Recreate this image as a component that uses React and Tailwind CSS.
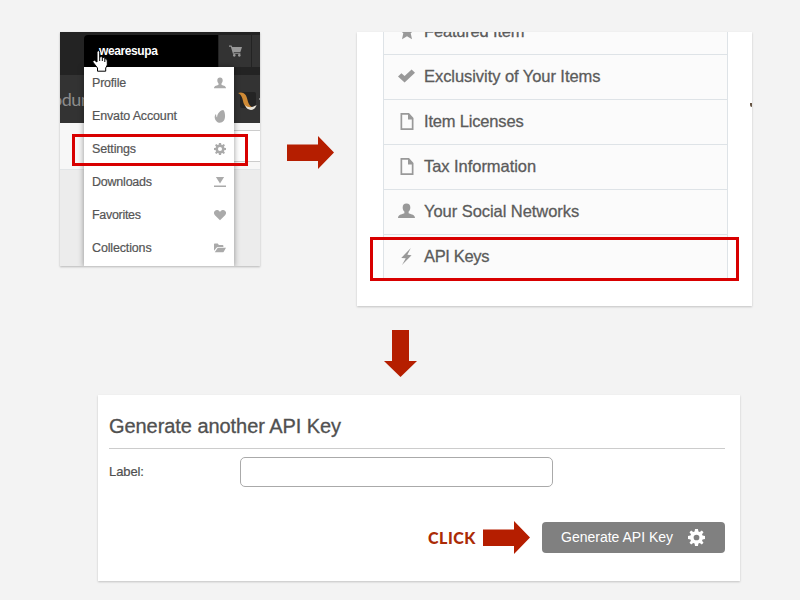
import React from 'react';

const GLYPHS = {
  user: 'M8 0.5C5.6 0.5 4.4 2 4.4 4.4C4.4 6.4 5.2 7.8 6 8.6V10.2C5 11.2 0 11 0 15H16C16 11 11 11.2 10 10.2V8.6C10.8 7.8 11.6 6.4 11.6 4.4C11.6 2 10.4 0.5 8 0.5Z',
  leaf: 'M12.6 0.2C14.6 1 16 9.8 13 13.3C10.6 16.3 5.8 16.5 3.3 13.8C0.4 11.3 0.4 7.5 1.9 5.4C2.4 4.9 2.9 5.3 2.9 6C2.8 7.5 3.2 8.6 4.1 9.3C4.1 3.8 9.8 -0.4 12.6 0.2Z',
  gear: 'M6.6 0H9.4L9.8 2.3L11.1 2.8L13 1.4L14.6 3L13.2 4.9L13.7 6.2L16 6.6V9.4L13.7 9.8L13.2 11.1L14.6 13L13 14.6L11.1 13.2L9.8 13.7L9.4 16H6.6L6.2 13.7L4.9 13.2L3 14.6L1.4 13L2.8 11.1L2.3 9.8L0 9.4V6.6L2.3 6.2L2.8 4.9L1.4 3L3 1.4L4.9 2.8L6.2 2.3ZM8 5.3A2.7 2.7 0 1 0 8 10.7A2.7 2.7 0 1 0 8 5.3Z',
  download: 'M2.5 1.2H13.5L8 10ZM0 12.6H16V14.8H0Z',
  heart: 'M8 15L1.2 8.2C-2 4.5 1.5 0.6 4.6 1.3C6.2 1.6 7.3 2.6 8 3.9C8.7 2.6 9.8 1.6 11.4 1.3C14.5 0.6 18 4.5 14.8 8.2Z',
  folder: 'M0 11.5V3Q0 2 1 2H5L6.5 4H11.5Q12.5 4 12.5 5V6.5H5.3Q4.2 6.5 3.6 7.4ZM1 13.8L4.6 8.2Q5 7.6 5.8 7.6H16L13 13Q12.5 13.8 11.5 13.8Z',
  star: 'M8 0L10.3 5.4L16 5.9L11.7 9.7L13 15.4L8 12.4L3 15.4L4.3 9.7L0 5.9L5.7 5.4Z',
  check: 'M0 8.4L3.2 5.2L6.2 8.1L12.8 1.6L16 4.8L6.2 14.4Z',
  file: 'M1.5 0H10L14.5 4.6V16H1.5ZM3.2 1.7V14.3H12.8V6H9V1.7Z',
  bolt: 'M12.6 0L2.4 9.3L7.2 9.6L3.2 16L13.4 6.8L8.9 6.4Z',
  cart: 'M0 0.5H3L4 2.5H16L14 9.2H5.7L6 10.4H14V11.8H4.8L2.3 2.2H0ZM4.8 13.8A1.7 1.7 0 1 0 8.2 13.8A1.7 1.7 0 1 0 4.8 13.8ZM11 13.8A1.7 1.7 0 1 0 14.4 13.8A1.7 1.7 0 1 0 11 13.8Z',
};

function Icon({ name, className }) {
  return (
    <svg viewBox="0 0 16 16" preserveAspectRatio="none" fill="currentColor" fillRule="evenodd" className={className}>
      <path d={GLYPHS[name]} />
    </svg>
  );
}

function Arrow({ className }) {
  return (
    <svg viewBox="0 0 47 33" fill="#b51e00" className={className}>
      <path d="M0 8.5H31V0L47 16.5L31 33V25H0Z" />
    </svg>
  );
}

const MENU = [
  ['Profile', 'user', 'w-3 h-3', 'tracking-[-0.2px]'],
  ['Envato Account', 'leaf', 'w-3 h-[13px]', 'tracking-[-0.15px]'],
  ['Settings', 'gear', 'w-3 h-3', 'tracking-[-0.15px]'],
  ['Downloads', 'download', 'w-3 h-3', 'tracking-[-0.22px]'],
  ['Favorites', 'heart', 'w-3 h-3', 'tracking-[-0.3px]'],
  ['Collections', 'folder', 'w-3 h-3', 'tracking-[-0.15px]'],
];

const ROWS = [
  ['Featured Item', 'star', 'w-4 h-[17px] mt-px', 'tracking-[-0.18px]'],
  ['Exclusivity of Your Items', 'check', 'w-[17px] h-4', 'tracking-[-0.06px]'],
  ['Item Licenses', 'file', 'w-4 h-[17px] mt-px', 'tracking-[-0.18px]'],
  ['Tax Information', 'file', 'w-4 h-[17px] mt-px', 'tracking-[-0.05px]'],
  ['Your Social Networks', 'user', 'w-[17px] h-4', 'tracking-[-0.05px]'],
  ['API Keys', 'bolt', 'w-[15px] h-[17px] mt-px', 'tracking-[-0.35px]'],
];

function AccountMenu() {
  return (
    <section className="relative h-[234px] w-[200px] shrink-0 overflow-hidden bg-[#ececec] shadow-[0_1px_2px_rgba(0,0,0,0.25)]">
      <div className="flex h-[43px] bg-[#232323] pt-[3px] pl-6">
        <div className="h-8 w-[134px] rounded-tl-[4px] bg-black pl-[15px] text-[12px] leading-[32px] font-bold tracking-[-0.4px] text-white">wearesupa</div>
        <div className="ml-px flex h-8 w-8 items-center justify-center bg-[#333] text-[#999]">
          <Icon name="cart" className="h-3 w-[13px]" />
        </div>
        <div className="ml-px h-8 grow bg-[#333]" />
      </div>
      <div className="flex h-12 items-center justify-between overflow-hidden bg-[#333]">
        <span className="-ml-[8px] font-['Lato'] text-[18px] leading-[46px] tracking-[-0.5px] text-[#8c8c8c]">odun</span>
        <div className="flex items-center">
          <svg viewBox="0 0 20 20" className="mt-1 h-5 w-5">
            <rect x="3" y="1" width="16" height="16" rx="2" fill="#242424" />
            <path d="M1 2C6 0 9.5 3 10.5 9C11.5 13 13 16 17 16.5C13 19 8 17 6.5 12C5.5 8 5 4 1 2Z" fill="#cf8a35" />
            <path d="M8 14C11 17 15 17 19.5 14C18 20.5 10 20.5 8 14Z" fill="#e8e2d6" />
          </svg>
          <span className="ml-[2px] h-[2px] w-px bg-[#888]" />
        </div>
      </div>
      <div className="flex h-[47px] justify-end border-b border-[#e2e5e7] bg-[#f7f7f7] pt-[7px]">
        <div className="h-8 w-[60px] border-y border-[#ccc] bg-white" />
      </div>
      <nav className="absolute top-[35px] left-6 h-[200px] w-[150px] bg-white shadow-[0_0_6px_rgba(0,0,0,0.4)]">
        {MENU.map(([label, icon, size, tracking]) => (
          <div key={label} className="flex h-[33px] items-center justify-between pr-2 pb-px pl-2 text-[12.5px] leading-none text-[#555] [-webkit-text-stroke:0.2px_#555]">
            <span className={tracking}>{label}</span>
            <Icon name={icon} className={`${size} text-[#aaa]`} />
          </div>
        ))}
      </nav>
      <svg viewBox="0 0 16 22" className="absolute top-[18px] left-8 h-[22px] w-4">
        <path d="M5 12V2.2Q5 .7 6.3 .7Q7.7 .7 7.7 2.2V7Q9.6 5.9 10.3 7.6Q12.2 6.8 12.8 8.6Q15.3 8.4 15.3 11V15L13.7 18V21.2H5.5V18L3.2 15L.8 12Q.4 10.2 2.4 10.2Z" fill="#fff" stroke="#000" />
        <path d="M7.7 7V11M10.3 7.6V11M12.8 8.6V12" stroke="#000" />
      </svg>
    </section>
  );
}

function SettingsList() {
  return (
    <section className="relative h-[274px] w-[395px] shrink-0 overflow-hidden bg-white shadow-[0_1px_2px_rgba(0,0,0,0.2)]">
      <div className="ml-[26px] h-[247px] w-[345px] overflow-hidden border-x border-[#dee3e7] bg-[#fbfbfb]">
        <div className="-mt-[23px]">
          {ROWS.map(([label, icon, size, tracking]) => (
            <div key={label} className="flex h-[45px] items-center border-t border-[#dee3e7] pb-[2px] text-[16.5px] leading-none text-[#5b5b5b] [-webkit-text-stroke:0.3px_#5b5b5b]">
              <div className="ml-[14px] flex w-[17px] justify-center">
                <Icon name={icon} className={`${size} text-[#999]`} />
              </div>
              <span className={`ml-[9px] ${tracking}`}>{label}</span>
            </div>
          ))}
        </div>
      </div>
      <span className="absolute top-[71px] right-0 h-1 w-[2px] rounded-bl-[2px] bg-[#665544]" />
    </section>
  );
}

export default function App() {
  return (
    <main className="relative flex h-[600px] w-[800px] flex-col overflow-hidden bg-[#f3f3f3] pt-8 font-['Liberation_Sans',Arial,sans-serif]">
      <div className="flex h-[274px] items-start pl-[60px]">
        <AccountMenu />
        <Arrow className="mt-[104px] ml-[27px] h-[33px] w-[47px] shrink-0" />
        <div className="ml-[23px]"><SettingsList /></div>
      </div>
      <div className="flex h-[89px] pt-6 pl-[384px]">
        <svg viewBox="0 0 33 47" fill="#b51e00" className="h-[47px] w-[33px]">
          <path d="M8 0H25V31H33L16.5 47L0 31H8Z" />
        </svg>
      </div>
      <section className="ml-[98px] h-[186px] w-[642px] bg-white pt-[10px] pr-[15px] pl-[11px] shadow-[0_1px_2px_rgba(0,0,0,0.2)]">
        <h1 className="h-11 border-b border-[#ccc] text-[20px] leading-[43px] tracking-[-0.06px] text-[#505050] [-webkit-text-stroke:0.3px_#505050]">Generate another API Key</h1>
        <label className="mt-2 flex items-center text-[13px] text-[#505050]">
          <span className="w-[131px] tracking-[-0.1px] [-webkit-text-stroke:0.2px_#505050]">Label:</span>
          <input className="h-[30px] w-[313px] rounded-[5px] border border-[#aaa] bg-white" />
        </label>
        <div className="mt-[34px] flex items-center justify-end">
          <span className="font-['Lato'] text-[16px] font-black tracking-[0.5px] text-[#ab2b06]">CLICK</span>
          <Arrow className="ml-[7px] h-[33px] w-[47px]" />
          <button className="ml-3 flex h-[31px] w-[183px] items-center rounded-[4px] bg-[#808080] pl-[19px] text-[14px] text-white">
            <span>Generate API Key</span>
            <Icon name="gear" className="ml-[15px] h-[17px] w-[17px]" />
          </button>
        </div>
      </section>
      <div className="absolute top-[134px] left-[72px] h-8 w-[176px] border-3 border-[#d80000]" />
      <div className="absolute top-[237px] left-[370px] h-11 w-[369px] border-3 border-[#d80000]" />
    </main>
  );
}
